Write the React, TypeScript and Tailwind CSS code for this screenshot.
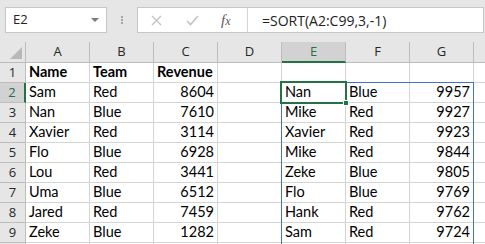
import React from "react";

const cols = ["A", "B", "C", "D", "E", "F", "G", ""];

type Row = (string | number)[];

// columns A..G for rows 1..9 (row 10 only peeks in at the bottom)
const rows: Row[] = [
  ["Name", "Team", "Revenue", "", "", "", ""],
  ["Sam", "Red", 8604, "", "Nan", "Blue", 9957],
  ["Nan", "Blue", 7610, "", "Mike", "Red", 9927],
  ["Xavier", "Red", 3114, "", "Xavier", "Red", 9923],
  ["Flo", "Blue", 6928, "", "Mike", "Red", 9844],
  ["Lou", "Red", 3441, "", "Zeke", "Blue", 9805],
  ["Uma", "Blue", 6512, "", "Flo", "Blue", 9769],
  ["Jared", "Red", 7459, "", "Hank", "Red", 9762],
  ["Zeke", "Blue", 1282, "", "Sam", "Red", 9724],
  ["", "", "", "", "", "", ""],
];

const cellFont = { fontFamily: "Lato, 'Liberation Sans', sans-serif" };
const uiFont = { fontFamily: "'Open Sans', 'Noto Sans', sans-serif" };

function FormulaBar() {
  return (
    <div className="h-[42px] bg-[#e6e6e6] flex items-start pt-[7px]" style={uiFont}>
      {/* name box */}
      <div className="ml-[5px] w-[102px] h-[26px] bg-white border border-[#c6c6c6] flex items-center justify-between pl-[7px] pr-[7px]">
        <span className="text-[13px] text-[#222]">E2</span>
        <span className="w-0 h-0 border-l-[4px] border-r-[4px] border-t-[4px] border-l-transparent border-r-transparent border-t-[#7a7a7a]" />
      </div>
      {/* dots */}
      <div className="w-[30px] h-[26px] flex flex-col items-center justify-center gap-[1px]">
        <span className="w-[2px] h-[2px] bg-[#a6a6a6]" />
        <span className="w-[2px] h-[2px] bg-[#a6a6a6]" />
        <span className="w-[2px] h-[2px] bg-[#a6a6a6]" />
      </div>
      {/* formula box */}
      <div className="w-[347px] h-[26px] bg-white border border-[#c6c6c6] flex items-center">
        <div className="w-[110px] h-full flex items-center border-r border-[#d4d4d4]">
          <svg width="11" height="11" viewBox="0 0 11 11" className="ml-[13px]">
            <path d="M1 1 L10 10 M10 1 L1 10" stroke="#c3c3c3" strokeWidth="1.4" />
          </svg>
          <svg width="13" height="11" viewBox="0 0 13 11" className="ml-[24px]">
            <path d="M1 6 L4.5 9.5 L12 1" stroke="#c3c3c3" strokeWidth="1.6" fill="none" />
          </svg>
          <span
            className="ml-[22px] text-[15px] italic text-[#5b5b5b]"
            style={{ fontFamily: "'Liberation Serif', serif" }}
          >
            f<span className="text-[12px]">x</span>
          </span>
        </div>
        <span className="ml-[14px] text-[14px] text-[#222]">=SORT(A2:C99,3,-1)</span>
      </div>
    </div>
  );
}

export default function App() {
  return (
    <div className="w-[485px] h-[244px] overflow-hidden bg-white relative">
      <FormulaBar />
      {/* column header row */}
      <div className="flex h-[21px] bg-[#e6e6e6]" style={uiFont}>
        <div className="w-[26px] shrink-0 h-full border-r border-b border-[#bdbdbd] flex items-end justify-end">
          <svg width="12" height="12" viewBox="0 0 12 12" className="mr-[3px] mb-[3px]">
            <polygon points="12,0 12,12 0,12" fill="#b8b8b8" />
          </svg>
        </div>
        {cols.map((c, i) =>
          c === "E" ? (
            <div
              key={i}
              className="w-[64px] shrink-0 h-full bg-[#d2d2d2] border-r border-[#bdbdbd] border-b-2 border-b-[#217346] flex items-center justify-center text-[13px] text-[#217346]"
            >
              {c}
            </div>
          ) : (
            <div
              key={i}
              className="w-[64px] shrink-0 h-full border-r border-b border-[#bdbdbd] flex items-center justify-center text-[13px] text-[#262626]"
            >
              {c}
            </div>
          )
        )}
      </div>
      {/* rows */}
      {rows.map((r, ri) => (
        <div key={ri} className="flex h-[20px]">
          <div
            className={
              ri === 1
                ? "w-[26px] shrink-0 h-full bg-[#d2d2d2] border-r-2 border-r-[#217346] border-b border-b-[#bdbdbd] flex items-center justify-center text-[13px] text-[#217346]"
                : "w-[26px] shrink-0 h-full bg-[#e6e6e6] border-r border-b border-[#bdbdbd] flex items-center justify-center text-[13px] text-[#262626]"
            }
            style={uiFont}
          >
            {ri < 9 ? ri + 1 : ""}
          </div>
          {[...r, ""].map((v, ci) => (
            <div
              key={ci}
              className={
                "w-[64px] shrink-0 h-full border-r border-b border-[#d4d4d4] flex items-end pb-[1px] px-[3px] text-[14.5px] leading-[18px] text-black " +
                (typeof v === "number" ? "justify-end " : "justify-start ") +
                (ri === 0 ? "font-bold" : "")
              }
              style={cellFont}
            >
              {v}
            </div>
          ))}
        </div>
      ))}
      {/* spill range border */}
      <div className="absolute left-[281px] top-[82px] w-[193px] h-[200px] border border-[#4472c4] pointer-events-none" />
      {/* active cell */}
      <div className="absolute left-[280px] top-[81px] w-[67px] h-[23px] border-2 border-[#217346] pointer-events-none" />
      <div className="absolute left-[343px] top-[100px] w-[6px] h-[6px] bg-[#217346] border border-white pointer-events-none" />
    </div>
  );
}
